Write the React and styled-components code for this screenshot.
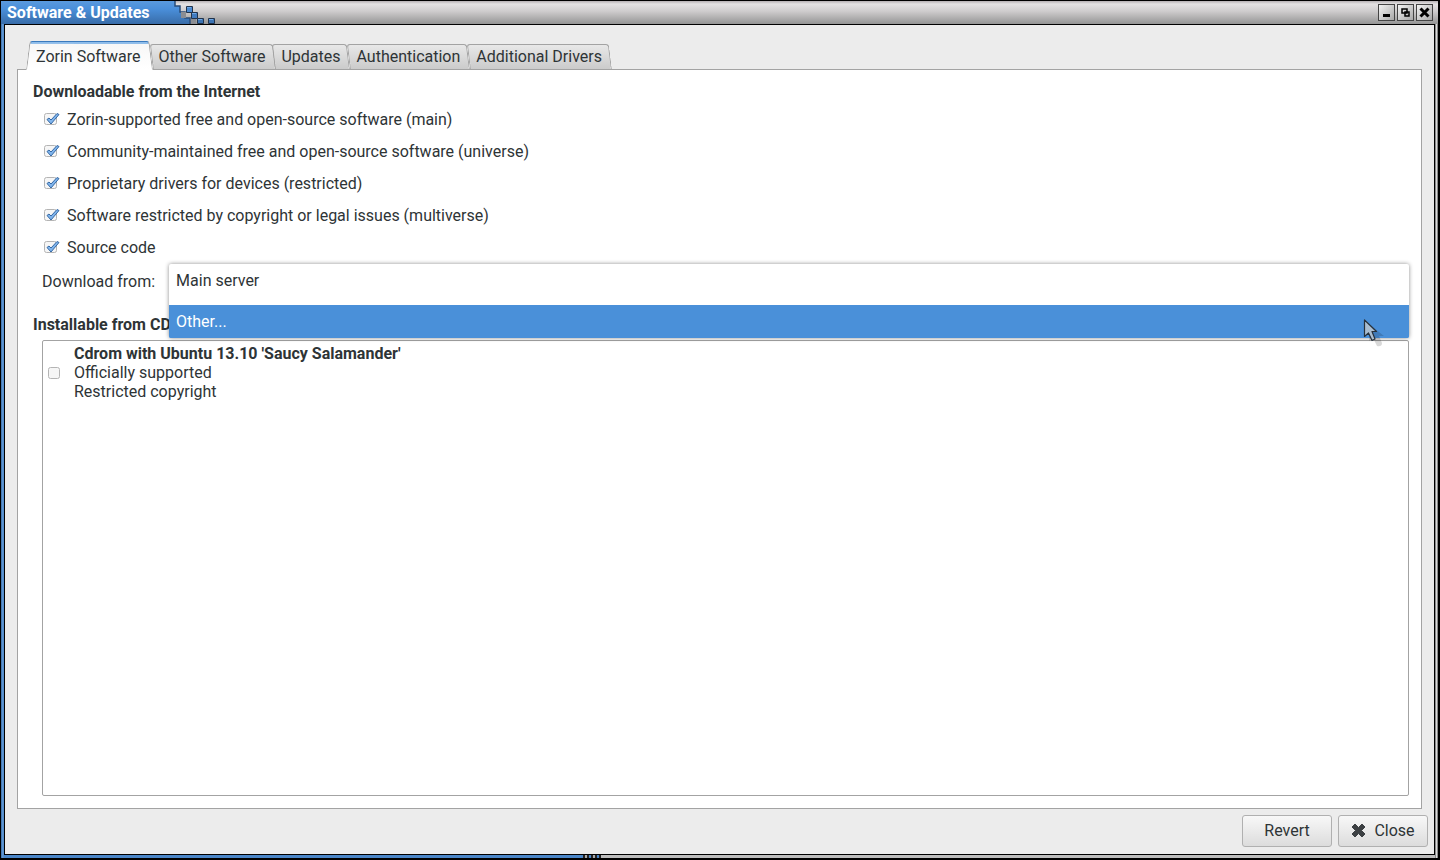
import { useState } from 'react'
import styled, { createGlobalStyle } from 'styled-components'

const tabs = [
  'Zorin Software',
  'Other Software',
  'Updates',
  'Authentication',
  'Additional Drivers',
]

const sources = [
  { id: 'main', label: 'Zorin-supported free and open-source software (main)' },
  {
    id: 'universe',
    label: 'Community-maintained free and open-source software (universe)',
  },
  { id: 'restricted', label: 'Proprietary drivers for devices (restricted)' },
  {
    id: 'multiverse',
    label: 'Software restricted by copyright or legal issues (multiverse)',
  },
  { id: 'source', label: 'Source code' },
]

const TitlePixels = () => (
  <svg width='46' height='23' viewBox='0 0 46 23' aria-hidden='true'>
    <defs>
      <linearGradient id='field' x1='0' y1='0' x2='0' y2='1'>
        <stop offset='0' stopColor='#5a9ade' />
        <stop offset='0.35' stopColor='#4a8fda' />
        <stop offset='1' stopColor='#386ca8' />
      </linearGradient>
    </defs>
    <path d='M0 0H6V5H11V11H16V17H21V23H0Z' fill='url(#field)' />
    <path
      d='M6 0V5H11V11H16V17H21V23'
      fill='none'
      stroke='#2a4c78'
      strokeWidth='1.500'
    />
    <path d='M12 11h5v6h-5zM22 17h5v6h-5z' fill='#8b8d92' />
    <g stroke='#22344c'>
      <path d='M17.500 5.500h6v6h-6z' fill='#4a8ad2' />
      <path d='M22.500 11.500h6v6h-6z' fill='#427cc0' />
      <path d='M28.500 17.500h6v5h-6z' fill='#3c74b4' />
      <path d='M39.500 17.500h6v5h-6z' fill='#3c74b4' />
    </g>
    <path
      d='M18 6.500h4M23 12.500h4M29 18.500h4M40 18.500h4'
      stroke='#6fa8e4'
    />
  </svg>
)

const Cross = () => (
  <svg width='15' height='15' viewBox='0 0 15 15' aria-hidden='true'>
    <path
      d='M4 1L7.500 4.500L11 1L14 4L10.500 7.500L14 11L11 14L7.500 10.500L4 14L1 11L4.500 7.500L1 4Z'
      fill='#3c4043'
      stroke='#3c4043'
      strokeLinejoin='round'
    />
  </svg>
)

const Pointer = () => (
  <svg width='22' height='30' viewBox='0 0 22 30' aria-hidden='true'>
    <path
      d='M6 6V23L10 20L14 28Q19 29 19 25L16 18H21Z'
      fill='#000'
      opacity='0.15'
    />
    <path
      d='M1.500 2V18.500L5.500 15L9 22.500L12 21L9 13.500H13.500Z'
      fill='#a9bdd0'
      stroke='#27313b'
      strokeWidth='1.200'
      strokeLinejoin='round'
    />
  </svg>
)

const App = () => {
  const [activeTab, setActiveTab] = useState(tabs[0])
  const [checked, setChecked] = useState(sources.map((item) => item.id))
  const [server, setServer] = useState('other')
  const [cdrom, setCdrom] = useState(false)

  const toggleSource = (id) => {
    if (checked.includes(id)) {
      setChecked(checked.filter((item) => item !== id))
      return
    }
    setChecked([...checked, id])
  }

  return (
    <>
      <GlobalStyle />
      <Window>
        <TitleBar>
          <Title>Software &amp; Updates</Title>
          <TitlePixels />
          <WindowButtons>
            <WindowButton type='button' aria-label='Minimize'>
              <svg width='13' height='13' viewBox='0 0 13 13'>
                <path d='M3 8h7v3h-7z' />
              </svg>
            </WindowButton>
            <WindowButton type='button' aria-label='Restore'>
              <svg width='13' height='13' viewBox='0 0 13 13'>
                <path
                  d='M3 3h5v4h-5zM6 6h4v4h-4z'
                  fill='none'
                  stroke='#000'
                  strokeWidth='1.500'
                />
              </svg>
            </WindowButton>
            <WindowButton type='button' aria-label='Close window'>
              <svg width='13' height='13' viewBox='0 0 13 13'>
                <path
                  d='M2.500 2.500L10.500 10.500M10.500 2.500L2.500 10.500'
                  stroke='#000'
                  strokeWidth='3'
                />
              </svg>
            </WindowButton>
          </WindowButtons>
        </TitleBar>
        <Frame>
          <Body>
            <TabList role='tablist'>
              {tabs.map((tab) => (
                <Tab
                  key={tab}
                  type='button'
                  role='tab'
                  aria-selected={tab === activeTab}
                  $active={tab === activeTab}
                  onClick={() => setActiveTab(tab)}
                >
                  {tab}
                </Tab>
              ))}
            </TabList>
            <Pane>
              <Heading>Downloadable from the Internet</Heading>
              <Sources>
                {sources.map(({ id, label }) => (
                  <CheckRow key={id}>
                    <Checkbox
                      type='checkbox'
                      checked={checked.includes(id)}
                      onChange={() => toggleSource(id)}
                    />
                    {label}
                  </CheckRow>
                ))}
              </Sources>
              <ServerRow>
                <label htmlFor='server'>Download from:</label>
                <Combo>
                  <ServerList
                    id='server'
                    size='2'
                    value={server}
                    onChange={(e) => setServer(e.target.value)}
                  >
                    <option value='main'>Main server</option>
                    <option value='other'>Other...</option>
                  </ServerList>
                  <PointerSpot>
                    <Pointer />
                  </PointerSpot>
                </Combo>
              </ServerRow>
              <Heading>Installable from CD-ROM/DVD</Heading>
              <DiscList>
                <DiscRow>
                  <Checkbox
                    type='checkbox'
                    checked={cdrom}
                    onChange={() => setCdrom(!cdrom)}
                  />
                  <span>
                    <b>Cdrom with Ubuntu 13.10 'Saucy Salamander'</b>
                    <br />
                    Officially supported
                    <br />
                    Restricted copyright
                  </span>
                </DiscRow>
              </DiscList>
            </Pane>
            <Actions>
              <Button type='button'>Revert</Button>
              <Button type='button'>
                <Cross />
                Close
              </Button>
            </Actions>
          </Body>
        </Frame>
      </Window>
    </>
  )
}

const GlobalStyle = createGlobalStyle`
  * {
    box-sizing: border-box;
  }
  body {
    margin: 0;
    background: #000;
    color: #2e3436;
    font: 16px/19px Roboto, 'Liberation Sans', sans-serif;
  }
  button,
  select {
    color: inherit;
    font: inherit;
  }
`

const Window = styled.main`
  display: flex;
  flex-direction: column;
  min-height: 100vh;
  padding: 1px 2px 2px 1px;
  background: #000;
`

const TitleBar = styled.header`
  display: flex;
  height: 23px;
  background: linear-gradient(#b5b0b3, #e4e2e3 3px, #cfcdce 10px, #959595);
`

const Title = styled.h1`
  width: 168px;
  margin: 0;
  padding-left: 6px;
  background: linear-gradient(#5a9ade, #4a8fda 8px, #386ca8);
  color: #fff;
  font-size: 16px;
  font-weight: 700;
  line-height: 23px;
  white-space: nowrap;
`

const WindowButtons = styled.div`
  display: flex;
  gap: 2px;
  margin-left: auto;
  padding: 3px 5px 0 0;
`

const WindowButton = styled.button`
  display: grid;
  place-items: center;
  width: 17px;
  height: 17px;
  padding: 0;
  border: 1px solid #444;
  background: linear-gradient(135deg, #f2f2f2, #a8a8a8);
`

/* blue on the left side, grey on the right, both meeting along the bottom */
const Frame = styled.div`
  display: flex;
  flex: 1;
  padding: 0 3px 3px;
  background:
    linear-gradient(90deg, #3b6ea8, #6ba3e0 2px, #3f78b8 3px) left / 3px 100%
      no-repeat,
    linear-gradient(90deg, #8c8c8c 1px, #dcdcdc 1px 2px, #8c8c8c 2px) right /
      3px 100% no-repeat,
    linear-gradient(
        90deg,
        #4a86c8 582px,
        #222 582px 584px,
        #aaa 584px 586px,
        #222 586px 588px,
        #4a86c8 588px 590px,
        #222 590px 592px,
        #aaa 592px 594px,
        #222 594px 596px,
        #4a86c8 596px 598px,
        #222 598px 600px,
        #bdbdbd 600px
      )
      bottom / 100% 3px no-repeat;
`

const Body = styled.div`
  display: flex;
  flex: 1;
  flex-direction: column;
  padding: 16px 12px 7px;
  border: 1px solid #000;
  background: #ececec;
`

const TabList = styled.div`
  display: flex;
  align-items: flex-end;
  margin-bottom: -1px;
  padding-left: 9px;
`

const Tab = styled.button`
  position: relative;
  z-index: ${({ $active }) => ($active ? 1 : 0)};
  height: ${({ $active }) => ($active ? '29px' : '26px')};
  padding: ${({ $active }) => ($active ? '2px 12px 0 10px' : '0 10px 2px 6px')};
  border: 0;
  background: none;
  isolation: isolate;

  &::before,
  &::after {
    content: '';
    position: absolute;
    z-index: -1;
    inset: 0;
    border: 1px solid #a3a3a3;
    border-bottom-color: ${({ $active }) => ($active ? '#fff' : '#a3a3a3')};
    background: ${({ $active }) =>
      $active
        ? 'linear-gradient(#8fbdea 2px, #f7f7f7 2px, #fff)'
        : 'linear-gradient(#e8e8e8, #cbcbcb)'};
    ${({ $active }) => $active && 'border-top-color: #3a7abd;'}
  }
  &::before {
    right: 50%;
    border-right: 0;
    border-top-left-radius: 3px;
    transform: skewX(${({ $active }) => ($active ? '-7deg' : '7deg')});
    transform-origin: bottom;
  }
  &::after {
    left: 40%;
    border-left: 0;
    border-top-right-radius: 3px;
    transform: skewX(7deg);
    transform-origin: bottom;
  }
`

const Pane = styled.section`
  display: flex;
  flex: 1;
  flex-direction: column;
  padding: 10px 12px 12px 15px;
  border: 1px solid #a3a3a3;
  background: #fff;
`

const Heading = styled.h2`
  margin: 0;
  font-size: 16px;
  font-weight: 700;
  line-height: 23px;
`

const Sources = styled.div`
  display: grid;
  padding-left: 11px;
`

const CheckRow = styled.label`
  display: flex;
  align-items: center;
  gap: 7px;
  height: 32px;
`

const Checkbox = styled.input`
  appearance: none;
  width: 16px;
  height: 16px;
  margin: 0;
  background: url("data:image/svg+xml,%3Csvg xmlns='http://www.w3.org/2000/svg' width='16' height='16'%3E%3Crect x='.5' y='2.500' width='11' height='11' rx='2' fill='%23f6f6f6' stroke='%23b4b4b4'/%3E%3C/svg%3E");

  &:checked {
    background: url("data:image/svg+xml,%3Csvg xmlns='http://www.w3.org/2000/svg' width='16' height='16'%3E%3Crect x='.5' y='2.500' width='12' height='11' rx='2' fill='%23f6f6f6' stroke='%23b4b4b4'/%3E%3Cpath d='M3 8.500L5 7L7 9L13 2.500L15 3.500L7 13Z' fill='%2380b4ec' stroke='%233468a4'/%3E%3C/svg%3E");
  }
`

const ServerRow = styled.div`
  display: flex;
  align-items: center;
  gap: 14px;
  height: 36px;
  margin-bottom: 14px;
  padding-left: 9px;
`

const Combo = styled.div`
  position: relative;
  z-index: 2;
  flex: 1;
  height: 34px;
`

const ServerList = styled.select`
  position: absolute;
  inset: 0 0 auto;
  width: 100%;
  height: 74px;
  padding: 0;
  border: 0;
  outline: 0;
  overflow: hidden;
  background: #fff;
  box-shadow: 0 0 4px rgba(0, 0, 0, 0.45);

  option {
    height: 41px;
    padding: 7px;
    color: #2e3436;
  }
  option:last-child {
    height: 33px;
  }
  option:checked {
    background: #4a90d9 linear-gradient(#4a90d9, #4a90d9);
    color: #fff;
  }
`

const PointerSpot = styled.span`
  position: absolute;
  top: 54px;
  right: 24px;
  pointer-events: none;
`

const DiscList = styled.div`
  flex: 1;
  margin: 4px 0 0 9px;
  padding: 3px 5px;
  border: 1px solid #a3a3a3;
  border-radius: 2px;
`

const DiscRow = styled.label`
  display: flex;
  align-items: center;
  gap: 10px;
`

const Actions = styled.footer`
  display: flex;
  justify-content: flex-end;
  gap: 6px;
  margin-right: -6px;
  padding-top: 6px;
`

const Button = styled.button`
  display: flex;
  align-items: center;
  justify-content: center;
  gap: 8px;
  width: 90px;
  height: 32px;
  padding: 0 0 2px;
  border: 1px solid #b0b0b0;
  border-radius: 3px;
  background: linear-gradient(#f8f8f8, #dcdcdc);
`

export default App
